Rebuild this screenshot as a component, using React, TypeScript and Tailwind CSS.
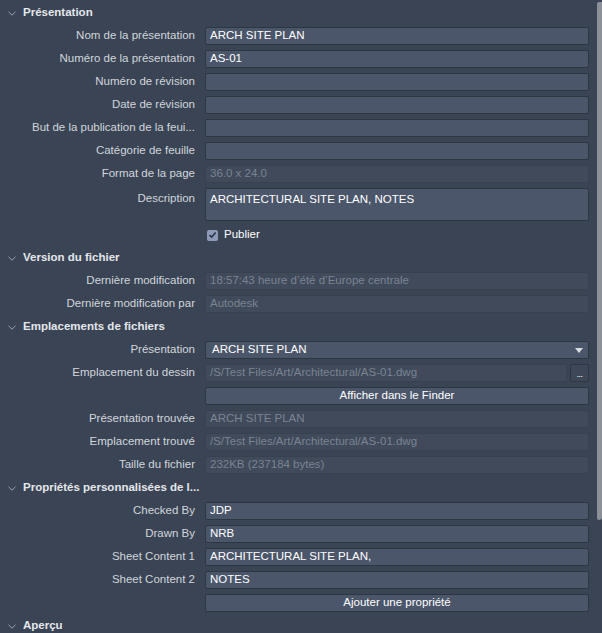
import React from "react";

const FONT = { fontFamily: '"Liberation Sans", Arial, sans-serif' };

function Chevron() {
  return (
    <svg width="8" height="5" viewBox="0 0 8 5" className="ml-[8px] mr-[7px]">
      <path d="M0.5 0.8 L4 4.2 L7.5 0.8" fill="none" stroke="#9aa2ad" strokeWidth="1" />
    </svg>
  );
}

function Header({ title }: { title: string }) {
  return (
    <div className="flex h-[18px] items-center">
      <Chevron />
      <span className="text-[11.5px] font-bold text-[#e4e7eb]">{title}</span>
    </div>
  );
}

function Label({ text }: { text: string }) {
  return (
    <div className="w-[195px] shrink-0 pr-0 text-right text-[11.5px] text-[#d2d6dc] whitespace-nowrap">
      {text}
    </div>
  );
}

function Row({ label, children, tall }: { label: string; children?: React.ReactNode; tall?: boolean }) {
  return (
    <div className={`flex ${tall ? "h-[33px] items-start" : "h-[18px] items-center"} gap-[10px] pr-[13px]`}>
      <div className={tall ? "pt-[2px]" : ""}>
        <Label text={label} />
      </div>
      {children}
    </div>
  );
}

function Field({ value, tall }: { value?: string; tall?: boolean }) {
  return (
    <div
      className={`flex-1 ${tall ? "h-[33px] items-start pt-[2px]" : "h-[18px] items-center"} flex rounded-[2px] border border-[#2d3741] bg-[#4b566a] px-[4px] text-[11.5px] text-white whitespace-nowrap overflow-hidden`}
    >
      {value}
    </div>
  );
}

function Disabled({ value }: { value?: string }) {
  return (
    <div className="flex h-[18px] flex-1 items-center overflow-hidden whitespace-nowrap rounded-[2px] border border-[#38424f] bg-[#404a5b] px-[4px] text-[11.5px] text-[#7b8392]">
      {value}
    </div>
  );
}

function Button({ text }: { text: string }) {
  return (
    <div className="flex h-[18px] flex-1 items-center justify-center rounded-[2px] border border-[#2d3741] bg-[#4b566a] text-[11.5px] text-white">
      {text}
    </div>
  );
}

export default function App() {
  return (
    <div className="relative h-[633px] w-[602px] overflow-hidden bg-[#3a4454]" style={FONT}>
      <div className="flex flex-col gap-[5px] pt-[4px]">
        <Header title="Présentation" />
        <Row label="Nom de la présentation"><Field value="ARCH SITE PLAN" /></Row>
        <Row label="Numéro de la présentation"><Field value="AS-01" /></Row>
        <Row label="Numéro de révision"><Field /></Row>
        <Row label="Date de révision"><Field /></Row>
        <Row label="But de la publication de la feui..."><Field /></Row>
        <Row label="Catégorie de feuille"><Field /></Row>
        <Row label="Format de la page"><Disabled value="36.0 x 24.0" /></Row>
        <Row label="Description" tall><Field value="ARCHITECTURAL SITE PLAN, NOTES" tall /></Row>
        <div className="flex h-[18px] items-center pl-[207px]">
          <div className="flex h-[11px] w-[11px] items-center justify-center rounded-[2px] bg-[#8e9ab8]">
            <svg width="9" height="8" viewBox="0 0 9 8">
              <path d="M1.5 4.2 L3.6 6.2 L7.6 1.4" fill="none" stroke="#2a3140" strokeWidth="1.6" />
            </svg>
          </div>
          <span className="ml-[6px] text-[11.5px] text-white">Publier</span>
        </div>

        <Header title="Version du fichier" />
        <Row label="Dernière modification"><Disabled value="18:57:43 heure d’été d’Europe centrale" /></Row>
        <Row label="Dernière modification par"><Disabled value="Autodesk" /></Row>

        <Header title="Emplacements de fichiers" />
        <Row label="Présentation">
          <div className="relative flex h-[18px] flex-1 items-center rounded-[2px] border border-[#2d3741] bg-[#4b566a] px-[6px] text-[11.5px] text-white">
            ARCH SITE PLAN
            <svg width="8" height="5" viewBox="0 0 8 5" className="absolute right-[5px] top-[6px]">
              <path d="M0 0 L8 0 L4 5 Z" fill="#d8dce2" />
            </svg>
          </div>
        </Row>
        <Row label="Emplacement du dessin">
          <div className="flex flex-1 gap-[3px]">
            <Disabled value="/S/Test Files/Art/Architectural/AS-01.dwg" />
            <div className="flex h-[18px] w-[19px] items-center justify-center rounded-[2px] border border-[#2d3741] bg-[#3d4757] text-[9px] leading-none text-white">
              <span className="mt-[2px] tracking-[-0.5px]">...</span>
            </div>
          </div>
        </Row>
        <Row label=""><Button text="Afficher dans le Finder" /></Row>
        <Row label="Présentation trouvée"><Disabled value="ARCH SITE PLAN" /></Row>
        <Row label="Emplacement trouvé"><Disabled value="/S/Test Files/Art/Architectural/AS-01.dwg" /></Row>
        <Row label="Taille du fichier"><Disabled value="232KB (237184 bytes)" /></Row>

        <Header title="Propriétés personnalisées de l..." />
        <Row label="Checked By"><Field value="JDP" /></Row>
        <Row label="Drawn By"><Field value="NRB" /></Row>
        <Row label="Sheet Content 1"><Field value="ARCHITECTURAL SITE PLAN," /></Row>
        <Row label="Sheet Content 2"><Field value="NOTES" /></Row>
        <Row label=""><Button text="Ajouter une propriété" /></Row>

        <Header title="Aperçu" />
      </div>
      <div className="absolute right-0 top-[2px] h-[518px] w-[5px] rounded-l-[2px] rounded-br-[3px] bg-[#8c9099]" />
    </div>
  );
}
